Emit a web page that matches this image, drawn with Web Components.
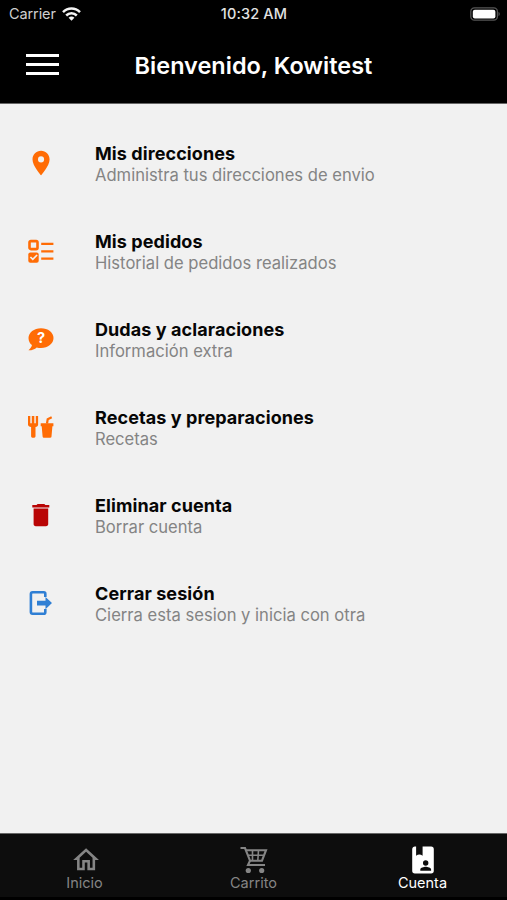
<!DOCTYPE html>
<html lang="es">
<head>
<meta charset="utf-8">
<title>Cuenta</title>
<style>
  html, body {
    height: 100%;
    margin: 0;
  }
  body {
    overflow: hidden;
    font-family: Inter, "Liberation Sans", sans-serif;
    background: #f1f1f1;
  }
</style>
</head>
<body>
<account-screen></account-screen>
<script>
(() => {
  const ICONS = {
    pin: '<path transform="translate(.4 .4) scale(1.22)" fill="currentColor" d="M12 2C8.13 2 5 5.13 5 9c0 5.25 7 13 7 13s7-7.75 7-13c0-3.87-3.13-7-7-7zm0 9.5a2.5 2.5 0 1 1 0-5 2.5 2.5 0 0 1 0 5z"/>',
    orders: `
      <g fill="none" stroke="currentColor" stroke-width="2.2">
        <rect x="3.5" y="5.1" width="8" height="8" rx="1.4" stroke-width="2.6"/>
        <path d="M15.2 7.9h12.2M15.2 15.3h12.2M15.2 22.6h12.2"/>
      </g>
      <rect x="2.3" y="16.4" width="10.4" height="10.3" rx="2" fill="currentColor"/>
      <path d="M4.4 21l2.4 2.4 4.3-4.4" fill="none" stroke="#f1f1f1" stroke-width="1.7"/>`,
    help: `
      <path fill="currentColor" d="M15 4.2c-7 0-12.5 4.3-12.5 9.8 0 3.2 1.6 5.8 3.5 7.1-.5 2-1.7 3.7-3.5 5.2 3.2.2 6.2-1.1 8.2-2.9 1.4.4 2.8.6 4.3.6 7 0 12.5-4.4 12.5-10S22 4.2 15 4.2z"/>
      <text x="15" y="19.2" text-anchor="middle" font-size="14.5" font-weight="700" fill="#fff">?</text>`,
    food: `
      <path fill="currentColor" d="M2 4h2.3v7.2h1.5V4h2.5v7.2h1.5V4h2.3v8.7c0 1.2-1.1 2-2.6 2.4v9.2c0 2-4.4 2-4.4 0v-9.2C3.4 14.7 2 13.9 2 12.7z"/>
      <path fill="currentColor" d="M14.7 11.3h12.7v3h-1l-.9 10.2c-.1.8-.5 1.2-1.2 1.2h-6.5c-.7 0-1.1-.4-1.2-1.2l-.9-10.2h-1z"/>
      <path fill="none" stroke="currentColor" stroke-width="2.2" d="M21 11.5l.7-4.3 4-1.9"/>`,
    trash: '<path fill="currentColor" d="M7.6 8.4h14.6v15.7c0 1.4-.8 2.1-2.2 2.1H9.8c-1.4 0-2.2-.7-2.2-2.1zM10.5 5.1l1.1-1h6.7l1.1 1h3.9v2.5H6.3V5.1z"/>',
    logout: `
      <path fill="none" stroke="currentColor" stroke-width="2.6" d="M19.3 9V5.8c0-.9-.6-1.5-1.5-1.5H6.6c-1 0-1.7.7-1.7 1.6v18.2c0 .9.7 1.6 1.7 1.6h11.2c.9 0 1.5-.6 1.5-1.5V21"/>
      <path fill="currentColor" d="M11 12.7h8.5V8.9l6.5 6.2-6.5 6.2v-3.8H11z"/>`,
    home: '<path transform="translate(.6 -.5) scale(1.29)" fill="currentColor" d="M12 5.69l5 4.5V18h-2v-6H9v6H7v-7.81l5-4.5M12 3L2 12h3v8h6v-6h2v6h6v-8h3"/>',
    cart: `
      <g fill="none" stroke="currentColor" stroke-width="2.1">
        <path d="M1.5 3H6l5 12.7-2 4.3h17"/>
        <path d="M6.8 5.2H27l-4 10.5H11"/>
        <path d="M9 10.2h15.6M13.5 5v10.7M19.5 5l-.7 10.7" stroke-width="1.6"/>
      </g>
      <circle cx="9.3" cy="25.5" r="2.6" fill="currentColor"/>
      <circle cx="22.7" cy="25.5" r="2.6" fill="currentColor"/>`,
    account: `
      <path transform="translate(-1.2 -1.2) scale(1.35)" fill="currentColor" fill-rule="evenodd" d="M6 2h.9v6.9Q9.3 6.9 11.7 8.9V2H18a2 2 0 0 1 2 2v16a2 2 0 0 1-2 2H6a2 2 0 0 1-2-2V4c0-1.1.9-2 2-2zM14 12.2a2 2 0 1 0 0 4 2 2 0 0 0 0-4zM10 20h8v-1c0-1.3-2.7-2-4-2s-4 .7-4 2z"/>`,
  };

  const define = (name, markup) => {
    window.customElements.define(name, class extends HTMLElement {
      constructor() {
        super();
        this.attachShadow({ mode: 'open' });
        this.shadowRoot.innerHTML = markup;
      }
    });
  };

  class AppIcon extends HTMLElement {
    connectedCallback() {
      if (this.shadowRoot) return;
      this.attachShadow({ mode: 'open' });
      this.shadowRoot.innerHTML = `
        <style>
          :host { display: block; width: 30px; height: 30px; flex: none; }
          svg { display: block; overflow: visible; }
        </style>
        <svg width="30" height="30" viewBox="0 0 30 30">${ICONS[this.getAttribute('name')]}</svg>
      `;
    }
  }
  window.customElements.define('app-icon', AppIcon);

  define('status-bar', `
    <style>
      :host {
        height: 27px;
        padding: 0 7px 0 9px;
        font-size: 14.5px;
        line-height: 27px;
        color: #cfcfcf;
        display: grid;
        grid-template-columns: 1fr auto 1fr;
        box-sizing: border-box;
      }
      div { display: flex; align-items: center; }
      svg { display: block; }
      .network { gap: 6px; }
      .carrier { letter-spacing: -0.1px; }
      .time {
        padding-right: 1px;
        font-weight: 500;
        letter-spacing: 0.15px;
        color: #e2e2e2;
      }
      .battery { justify-content: flex-end; }
    </style>
    <div class="network">
      <span class="carrier">Carrier</span>
      <svg width="19" height="14" viewBox="0 0 19 14">
        <g fill="none" stroke="#f4f4f4" stroke-width="2.5">
          <path d="M1 5.2C5.8.4 13.2.4 18 5.2"/>
          <path d="M4.2 8.5c3-3 7.6-3 10.6 0"/>
        </g>
        <path fill="#f4f4f4" d="M6.6 10.7c1.7-1.5 4.1-1.5 5.8 0l-2.9 3z"/>
      </svg>
    </div>
    <div class="time">10:32 AM</div>
    <div class="battery">
      <svg width="30" height="14" viewBox="0 0 30 14">
        <rect x=".8" y=".8" width="26.6" height="12.4" rx="3.6" fill="none" stroke="#555" stroke-width="1.3"/>
        <rect x="2.8" y="2.7" width="22.6" height="8.7" rx="2" fill="#fff"/>
        <path d="M28.5 5c1.7.7 1.7 3.3 0 4z" fill="#555"/>
      </svg>
    </div>
  `);

  define('page-header', `
    <style>
      :host {
        height: 77px;
        padding: 0 26px 1px;
        color: #fff;
        border-bottom: 1px solid #666;
        display: grid;
        grid-template-columns: 33px 1fr 33px;
        align-items: center;
        box-sizing: border-box;
      }
      button {
        padding: 0;
        border: 0;
        background: none;
        display: grid;
        gap: 6px;
      }
      i { height: 3px; background: #fff; }
      h1 {
        margin: 0;
        padding-top: 2px;
        font-size: 23.5px;
        font-weight: 600;
        line-height: 30px;
        text-align: center;
        white-space: nowrap;
      }
    </style>
    <button type="button" aria-label="Menu"><i></i><i></i><i></i></button>
    <h1><slot></slot></h1>
  `);

  define('menu-item', `
    <style>
      :host {
        height: 88px;
        padding: 0 26px;
        display: flex;
        align-items: center;
        gap: 39px;
        box-sizing: border-box;
      }
      .text { padding-top: 2px; }
      .title, .detail { white-space: nowrap; }
      .title {
        font-size: 18px;
        font-weight: 700;
        line-height: 21px;
        letter-spacing: 0.08px;
        color: #060606;
      }
      .detail {
        margin-bottom: -2px;
        font-size: 16.6px;
        line-height: 23px;
        color: #848484;
      }
    </style>
    <slot name="icon"></slot>
    <div class="text">
      <div class="title"><slot name="title"></slot></div>
      <div class="detail"><slot></slot></div>
    </div>
  `);

  define('tab-item', `
    <style>
      :host {
        padding-top: 11px;
        color: #858585;
        font-size: 14.5px;
        line-height: 18px;
        display: flex;
        flex-direction: column;
        align-items: center;
      }
      :host([active]) { color: #fff; }
      .label { margin-top: -1px; }
    </style>
    <slot name="icon"></slot>
    <span class="label"><slot></slot></span>
  `);

  define('tab-bar', `
    <style>
      :host {
        height: 67px;
        border-top: 1px solid #666;
        border-bottom: 3px solid #000;
        background: #0d0d0d;
        display: grid;
        grid-template-columns: repeat(3, 1fr);
        box-sizing: border-box;
      }
    </style>
    <slot></slot>
  `);

  define('account-screen', `
    <style>
      :host {
        height: 100vh;
        display: flex;
        flex-direction: column;
      }
      .top { background: #000; }
      main { flex: 1; padding-top: 15px; }
      .orange { color: #ff6c05; }
      .red { color: #b90505; }
      .blue { color: #2f7fd4; }
    </style>
    <div class="top">
      <status-bar></status-bar>
      <page-header>Bienvenido, Kowitest</page-header>
    </div>
    <main>
      <menu-item>
        <app-icon slot="icon" class="orange" name="pin"></app-icon>
        <span slot="title">Mis direcciones</span>Administra tus direcciones de envio
      </menu-item>
      <menu-item>
        <app-icon slot="icon" class="orange" name="orders"></app-icon>
        <span slot="title">Mis pedidos</span>Historial de pedidos realizados
      </menu-item>
      <menu-item>
        <app-icon slot="icon" class="orange" name="help"></app-icon>
        <span slot="title">Dudas y aclaraciones</span>Información extra
      </menu-item>
      <menu-item>
        <app-icon slot="icon" class="orange" name="food"></app-icon>
        <span slot="title">Recetas y preparaciones</span>Recetas
      </menu-item>
      <menu-item>
        <app-icon slot="icon" class="red" name="trash"></app-icon>
        <span slot="title">Eliminar cuenta</span>Borrar cuenta
      </menu-item>
      <menu-item>
        <app-icon slot="icon" class="blue" name="logout"></app-icon>
        <span slot="title">Cerrar sesión</span>Cierra esta sesion y inicia con otra
      </menu-item>
    </main>
    <tab-bar>
      <tab-item><app-icon slot="icon" name="home"></app-icon>Inicio</tab-item>
      <tab-item><app-icon slot="icon" name="cart"></app-icon>Carrito</tab-item>
      <tab-item active><app-icon slot="icon" name="account"></app-icon>Cuenta</tab-item>
    </tab-bar>
  `);
})();
</script>
</body>
</html>
